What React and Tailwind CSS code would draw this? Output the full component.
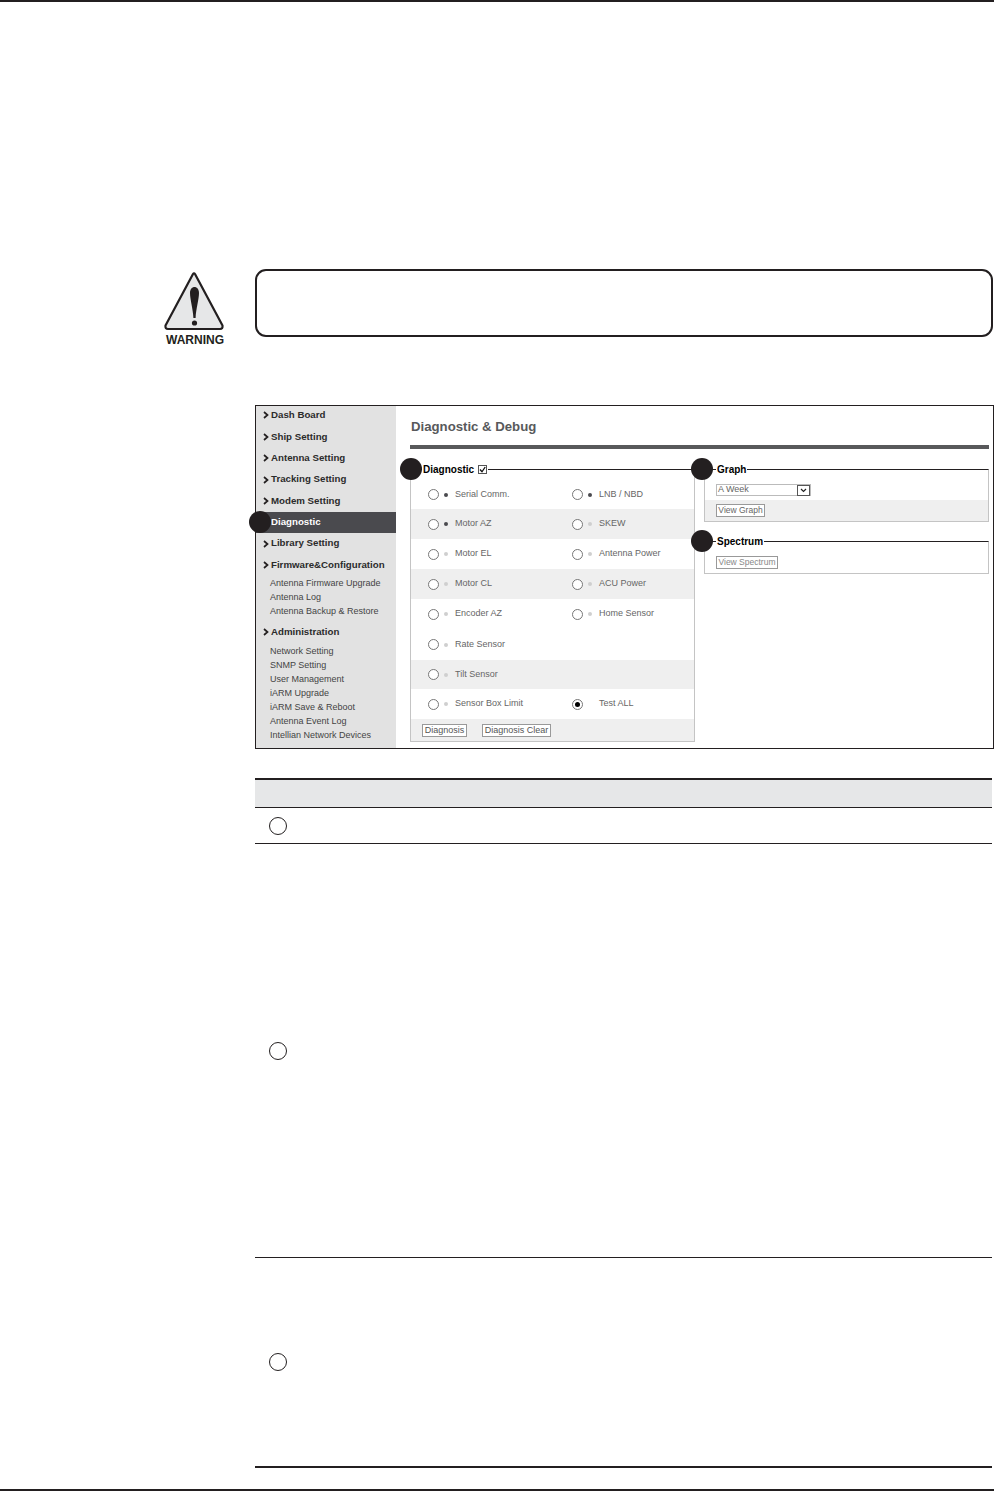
const headingClass = 'flex items-center gap-[1px] pl-[7px] text-[9.7px] font-bold text-[#2b2b2b]';

function Chevron() {
  return (
    <svg width="6" height="8" viewBox="0 0 6 8" className="shrink-0 mr-[1px]">
      <path d="M1 1l3.5 3L1 7" fill="none" stroke="#231f20" strokeWidth="1.7" />
    </svg>
  );
}

function Heading({ label, className }) {
  return (
    <div className={`${headingClass} ${className}`}>
      <Chevron />
      <span>{label}</span>
    </div>
  );
}

function SubItems({ items }) {
  return (
    <div className="pl-[14px]">
      {items.map((item) => (
        <div key={item} className="h-[14px] leading-[14px] text-[9px] text-[#444]">
          {item}
        </div>
      ))}
    </div>
  );
}

function Sidebar() {
  return (
    <div className="w-[140px] shrink-0 bg-[#e2e2e2]">
      <Heading label="Dash Board" className="h-[20.5px] pb-[2px]" />
      <Heading label="Ship Setting" className="h-[21.3px]" />
      <Heading label="Antenna Setting" className="h-[21.3px]" />
      <Heading label="Tracking Setting" className="h-[21.3px]" />
      <Heading label="Modem Setting" className="h-[21.3px]" />
      <div className="flex h-[21.3px] items-center bg-[#4a4a4e] pl-[15px] text-[9.7px] font-bold text-white">Diagnostic</div>
      <Heading label="Library Setting" className="h-[21.3px]" />
      <Heading label="Firmware&Configuration" className="h-[21.3px]" />
      <SubItems items={['Antenna Firmware Upgrade', 'Antenna Log', 'Antenna Backup & Restore']} />
      <Heading label="Administration" className="mb-[1px] mt-[4px] h-[21.3px]" />
      <SubItems
        items={[
          'Network Setting',
          'SNMP Setting',
          'User Management',
          'iARM Upgrade',
          'iARM Save & Reboot',
          'Antenna Event Log',
          'Intellian Network Devices',
        ]}
      />
    </div>
  );
}

function Radio({ checked }) {
  return (
    <span className="flex h-[11px] w-[11px] shrink-0 items-center justify-center rounded-full border border-[#777] bg-white">
      {checked && <span className="h-[5px] w-[5px] rounded-full bg-black" />}
    </span>
  );
}

function Cell({ label, dot, checked }) {
  if (!label) return <div />;
  return (
    <div className="flex items-center text-[9px] text-[#666]">
      <Radio checked={checked} />
      <span
        className={`ml-[5px] h-[4px] w-[4px] rounded-full ${
          dot === 'on' ? 'bg-[#4a4a4e]' : dot === 'off' ? 'bg-[#cfcfcf]' : ''
        }`}
      />
      <span className="ml-[7px]">{label}</span>
    </div>
  );
}

const rows = [
  { h: 'h-[29px]', a: ['Serial Comm.', 'on'], b: ['LNB / NBD', 'on'] },
  { h: 'h-[30px]', gray: true, a: ['Motor AZ', 'on'], b: ['SKEW', 'off'] },
  { h: 'h-[30px]', a: ['Motor EL', 'off'], b: ['Antenna Power', 'off'] },
  { h: 'h-[30px]', gray: true, a: ['Motor CL', 'off'], b: ['ACU Power', 'off'] },
  { h: 'h-[30px]', a: ['Encoder AZ', 'off'], b: ['Home Sensor', 'off'] },
  { h: 'h-[31px]', a: ['Rate Sensor', 'off'], b: [] },
  { h: 'h-[29px]', gray: true, a: ['Tilt Sensor', 'off'], b: [] },
  { h: 'h-[30px]', a: ['Sensor Box Limit', 'off'], b: ['Test ALL', 'none', true] },
];

function SmallButton({ children, className = '' }) {
  return (
    <button className={`h-[13px] whitespace-nowrap border border-[#999] bg-white text-center leading-[11px] ${className}`}>
      {children}
    </button>
  );
}

function Box({ label, extra, className = '', children }) {
  return (
    <fieldset className={`border border-[#c4c4c4] border-t-[#231f20] ${className}`}>
      <legend className="ml-[11px] flex h-[12px] items-center px-[1px] text-[10px] font-bold text-black">
        <span>{label}</span>
        {extra}
      </legend>
      <div className="pt-[5px]">{children}</div>
    </fieldset>
  );
}

function DiagnosticBox() {
  const check = (
    <span className="ml-[4px] flex h-[9px] w-[9px] items-center justify-center border border-[#555] bg-white">
      <svg width="7" height="7" viewBox="0 0 7 7">
        <path d="M1 3.5l2 2.3L6.2 1" fill="none" stroke="#111" strokeWidth="1.3" />
      </svg>
    </span>
  );
  return (
    <Box label="Diagnostic" extra={check} className="w-[285px] shrink-0">
      {rows.map((row) => (
        <div key={row.a[0]} className={`grid grid-cols-[144px_1fr] items-center pl-[17px] ${row.h} ${row.gray ? 'bg-[#efefef]' : ''}`}>
          <Cell label={row.a[0]} dot={row.a[1]} />
          <Cell label={row.b[0]} dot={row.b[1]} checked={row.b[2]} />
        </div>
      ))}
      <div className="flex h-[22px] items-center gap-[15px] bg-[#efefef] pl-[11px] text-[9px] text-[#555]">
        <SmallButton className="w-[45px]">Diagnosis</SmallButton>
        <SmallButton className="w-[69px]">Diagnosis Clear</SmallButton>
      </div>
    </Box>
  );
}

function SidePanels() {
  return (
    <div className="flex-1">
      <Box label="Graph">
        <div className="flex h-[20px] items-center pl-[11px]">
          <div className="flex h-[12px] w-[95px] items-center justify-between border border-[#bbb] pl-[1px] text-[9px] text-[#666]">
            <span>A Week</span>
            <span className="flex h-[11px] w-[13px] items-center justify-center border border-[#555]">
              <svg width="7" height="5" viewBox="0 0 7 5">
                <path d="M1 1l2.5 2.5L6 1" fill="none" stroke="#222" strokeWidth="1.2" />
              </svg>
            </span>
          </div>
        </div>
        <div className="flex h-[21px] items-center bg-[#efefef] pl-[11px]">
          <SmallButton className="w-[49px] text-[8.5px] text-[#666]">View Graph</SmallButton>
        </div>
      </Box>
      <Box label="Spectrum" className="mt-[13px]">
        <div className="flex h-[21px] items-center pl-[11px]">
          <SmallButton className="w-[62px] text-[8.5px] text-[#888]">View Spectrum</SmallButton>
        </div>
      </Box>
    </div>
  );
}

function Badge({ className }) {
  return <span className={`absolute h-[22px] w-[22px] rounded-full bg-[#231f20] ${className}`} />;
}

function ConsolePanel() {
  return (
    <div className="relative ml-[255px] mt-[68px] flex h-[344px] w-[739px] border border-[#231f20] bg-white">
      <Sidebar />
      <div className="flex-1 pl-[14px] pr-[4px]">
        <div className="pl-[1px] pt-[12px] text-[13.2px] font-bold leading-[17px] text-[#58595b]">Diagnostic & Debug</div>
        <div className="mt-[10px] h-[4px] bg-[#58595b]" />
        <div className="mt-[14px] flex gap-[9px]">
          <DiagnosticBox />
          <SidePanels />
        </div>
      </div>
      <Badge className="left-[-7px] top-[105px]" />
      <Badge className="left-[144px] top-[52px]" />
      <Badge className="left-[435px] top-[52px]" />
      <Badge className="left-[435px] top-[124px]" />
    </div>
  );
}

function WarningIcon() {
  return (
    <div className="flex w-[64px] flex-col items-center">
      <svg width="64" height="60" viewBox="0 0 64 60">
        <path d="M30 3L2.5 54.5Q2 58 5 58H57Q60 58 59.5 54.5L32 3Q31 1.5 30 3Z" fill="#e6e7e8" stroke="#231f20" strokeWidth="2.2" strokeLinejoin="round" />
        <path d="M27 22C27 14 36 14 36 22C36 28 33 38 32.6 47H30.4C30 38 27 28 27 22Z" fill="#231f20" />
        <circle cx="31.5" cy="52" r="2.6" fill="#231f20" />
      </svg>
      <span className="mt-[2px] text-[12px] font-bold leading-[14px] text-[#231f20]">WARNING</span>
    </div>
  );
}

function TableRow({ className }) {
  return (
    <div className={`flex items-center border-[#231f20] pl-[14px] ${className}`}>
      <span className="h-[18px] w-[18px] rounded-full border-[1.5px] border-[#231f20]" />
    </div>
  );
}

export default function App() {
  return (
    <div className="h-[1491px] w-[994px] overflow-hidden border-y-2 border-[#231f20] bg-white font-['Liberation_Sans',Arial,sans-serif]">
      {/* warning */}
      <div className="ml-[163px] mt-[267px] flex h-[68px] items-start">
        <div className="mt-[2px]">
          <WarningIcon />
        </div>
        <div className="ml-[28px] h-[68px] w-[738px] shrink-0 rounded-[11px] border-2 border-[#231f20]" />
      </div>

      <ConsolePanel />

      {/* table */}
      <div className="ml-[255px] mt-[29px] w-[737px] border-t-2 border-[#231f20]">
        <div className="h-[28px] border-b border-[#231f20] bg-[#e6e7e8]" />
        <TableRow className="h-[36px] border-b" />
        <TableRow className="h-[414px] border-b" />
        <TableRow className="h-[210px] border-b-2" />
      </div>
    </div>
  );
}
